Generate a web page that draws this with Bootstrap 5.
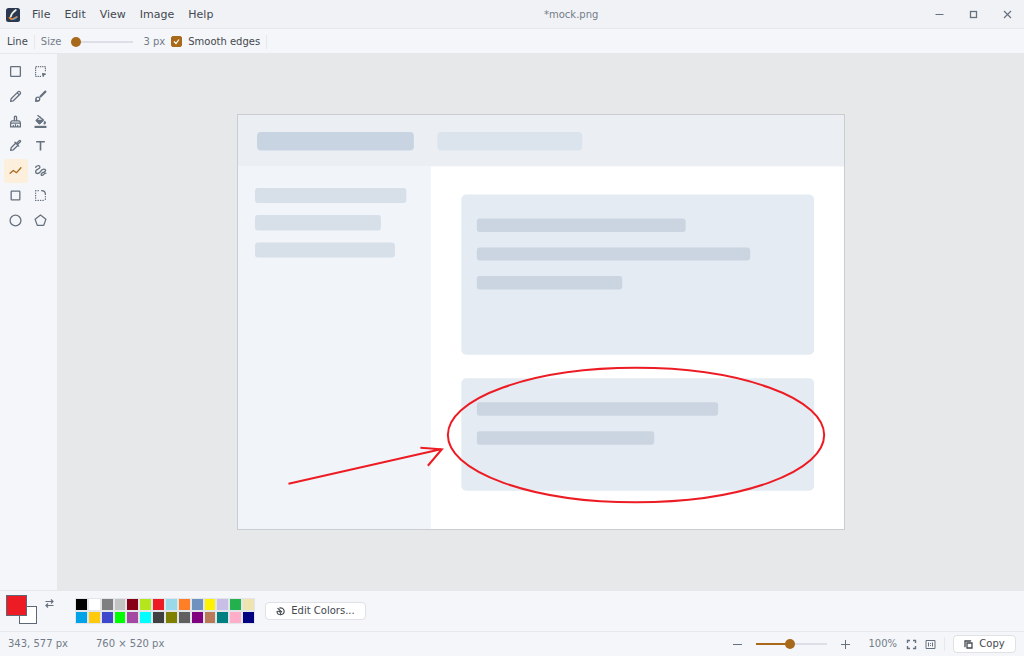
<!DOCTYPE html>
<html lang="en">
<head>
<meta charset="utf-8">
<meta name="viewport" content="width=device-width, initial-scale=1">
<title>*mock.png</title>
<link rel="stylesheet" href="https://cdn.jsdelivr.net/npm/bootstrap@5.3.0/dist/css/bootstrap.min.css">
<style>
  :root { --accent: #a9691a; --ink: #43484f; --muted: #727c89; --bar: #f5f6f9; --line: #e6e8eb; }
  body { font: 10px/16px "DejaVu Sans", sans-serif; color: var(--ink); background: var(--bar); }
  svg { display: block; flex: none; }
  .ico { width: 13px; height: 13px; fill: none; stroke: currentColor; stroke-width: 2.4; stroke-linecap: round; stroke-linejoin: round; }
  .flat { border: 0; padding: 0; background: none; color: #66717f; display: flex; align-items: center; justify-content: center; }
  .titlebar { height: 29px; padding: 1px 0 0 6px; background: #f1f2f6; border-bottom: 1px solid var(--line); }
  .menu { margin-left: 5px; }
  .menu-item { border: 0; padding: 0 7px; background: none; color: var(--ink); font-size: 11px; }
  .win { width: 34px; }
  .optionbar { height: 25px; gap: 6px; border-bottom: 1px solid var(--line); padding: 1px 0 0 7px; }
  .rule { width: 1px; height: 14px; background: var(--line); }
  .hint { color: var(--muted); }
  .slider { appearance: none; height: 10px; margin: 0; background: linear-gradient(#dcdfe7, #dcdfe7) center / 100% 2px no-repeat; }
  .slider::-webkit-slider-thumb { appearance: none; width: 10px; height: 10px; border-radius: 50%; background: var(--accent); }
  .size-slider { width: 62px; margin: 0 4px; }
  .zoom-slider { width: 71px; margin: 0 14px; background: linear-gradient(90deg, var(--accent) 48%, #dcdfe7 48%) center / 100% 2px no-repeat; }
  .tick { appearance: none; width: 11px; height: 11px; margin: 0; border-radius: 2px; border: 1px solid var(--accent); }
  .tick:checked { background: var(--accent) url("data:image/svg+xml,%3Csvg xmlns='http://www.w3.org/2000/svg' viewBox='0 0 11 11'%3E%3Cpath d='M3 5.5l2 2 3-4' fill='none' stroke='white' stroke-width='1.2'/%3E%3C/svg%3E") center / 11px no-repeat; }
  .toolbox { width: 58px; padding: 6px 4px; border-right: 1px solid var(--line); }
  .tools { display: grid; grid-template-columns: 24px 24px; grid-auto-rows: 1fr; gap: 1px; height: 172px; }
  .tools .flat { border-radius: 3px; padding-right: 1px; }
  .tools .active { background: #fcefdc; color: var(--accent); }
  .workspace { min-height: 0; }
  .stage { background: #e7e8ea; }
  .picture { width: 63%; min-width: 320px; background: #fff; border: 1px solid #c9ccd0; }
  .picture svg { width: 100%; height: auto; }
  .palettebar { height: 41px; border-top: 1px solid var(--line); padding-left: 6px; }
  .pair { position: relative; width: 31px; height: 29px; margin-bottom: 3px; }
  .fore, .back { position: absolute; border: 1px solid #5d6876; padding: 0; }
  .fore { left: 0; top: 0; width: 21px; height: 21px; background: #ed1c24; z-index: 1; }
  .back { right: 0; bottom: 0; width: 18px; height: 18px; background: #fff; }
  .swatches { display: grid; grid-template-columns: repeat(14, 1fr); gap: 2px; width: 178px; height: 24px; margin: 0 11px 0 22px; }
  .swatches button { border: 0; padding: 0; background: var(--c); box-shadow: 0 0 0 1px #e2e5e9; }
  .soft { display: flex; align-items: center; justify-content: center; gap: 6px; height: 18px; border: 1px solid #dfe1e7; border-radius: 4px; padding: 0; background: #fff; color: var(--ink); }
  .edit-colors { width: 101px; }
  .copy { width: 63px; }
  .statusbar { height: 25px; border-top: 1px solid var(--line); padding: 0 8px; }
  .dimensions { margin-left: 28px; }
  .percent { margin: 0 9px 0 18px; }
</style>
</head>
<body class="d-flex flex-column vh-100 overflow-hidden">
<header class="titlebar d-flex align-items-center">
  <svg width="14" height="14" viewBox="0 0 14 14" aria-hidden="true"><rect width="14" height="14" rx="2.5" fill="#2a3850"/><path d="M3.5 9.8Q5.5 12.8 10.8 9" fill="none" stroke="#f5852c" stroke-width="1.8" stroke-linecap="round"/><path d="M6.500 11.500Q9.500 11.300 11 9.200" fill="none" stroke="#48a5df" stroke-width="1.2"/><path d="M9.800 2Q5.500 5 4.800 8.700" fill="none" stroke="#f2eee8" stroke-width="1.8" stroke-linecap="round"/></svg>
  <nav class="menu d-flex" aria-label="Main">
    <button class="menu-item">File</button><button class="menu-item">Edit</button><button class="menu-item">View</button><button class="menu-item">Image</button><button class="menu-item">Help</button>
  </nav>
  <div class="hint flex-grow-1 text-center">*mock.png</div>
  <div class="d-flex">
    <button class="flat win" aria-label="Minimize"><svg width="9" height="9" viewBox="0 0 9 9" fill="none" stroke="currentColor"><path d="M.5 4.5h8"/></svg></button>
    <button class="flat win" aria-label="Maximize"><svg width="9" height="9" viewBox="0 0 9 9" fill="none" stroke="currentColor" stroke-width="1.3"><rect x="1.500" y="1.500" width="6" height="6"/></svg></button>
    <button class="flat win" aria-label="Close"><svg width="9" height="9" viewBox="0 0 9 9" fill="none" stroke="currentColor" stroke-width="1.2"><path d="M1 1l7 7M8 1L1 8"/></svg></button>
  </div>
</header>
<div class="optionbar d-flex align-items-center">
  <span>Line</span><span class="rule"></span>
  <label class="hint" for="size">Size</label>
  <input class="slider size-slider" id="size" type="range" min="1" max="50" value="1">
  <output class="hint" for="size">3 px</output>
  <input class="tick" id="smooth" type="checkbox" checked>
  <label for="smooth">Smooth edges</label><span class="rule"></span>
</div>
<div class="workspace d-flex flex-grow-1">
  <aside class="toolbox flex-shrink-0">
    <div class="tools">
      <button class="flat" aria-label="Select"><svg class="ico" viewBox="0 0 24 24"><rect x="3" y="3" width="18" height="18" rx="1"/></svg></button>
      <button class="flat" aria-label="Magic select"><svg class="ico" viewBox="0 0 24 24"><path d="M12 21H3V3h18v9" stroke-dasharray=".5 3.500"/><path d="M16 16l5 1-3 1-1 3z" fill="currentColor"/></svg></button>
      <button class="flat" aria-label="Pencil"><svg class="ico" viewBox="0 0 24 24"><path d="M3 21l1-5L17 3q2-1 3.500.5T21 7L8 20zM15 5l4 4"/></svg></button>
      <button class="flat" aria-label="Brush"><svg class="ico" viewBox="0 0 24 24"><path d="M21 3l-9 9" style="stroke-width:4"/><circle cx="7" cy="16.500" r="3.500"/><path d="M4 17l-1 4 5-1"/></svg></button>
      <button class="flat" aria-label="Eraser"><svg class="ico" viewBox="0 0 24 24"><path d="M10 11V4q0-2 2-2t2 2v7M5 11h14q2 1 2 4H3q0-3 2-4zM3 15v7h18v-7M8 19v3M12 18v4M16 19v3"/></svg></button>
      <button class="flat" aria-label="Fill"><svg class="ico" viewBox="0 0 24 24"><path d="M7 1l10 8-7 7-6-6 7-7"/><path d="M5 10h12l-7 6z" fill="currentColor"/><path d="M20 12q2 3 0 4t-1-1z" fill="currentColor"/><path d="M1 22h22" style="stroke-width:4;stroke-linecap:butt"/></svg></button>
      <button class="flat" aria-label="Color picker"><svg class="ico" viewBox="0 0 24 24"><path d="M13 7L4 16l-1 5 5-1 9-9M11 6l7 7"/><path d="M15 7l4-4q1-1 2 0t0 2l-4 4z"/></svg></button>
      <button class="flat" aria-label="Text"><svg class="ico" viewBox="0 0 24 24"><path d="M4 5h16M12 5v16" style="stroke-width:3;stroke-linecap:butt"/></svg></button>
      <button class="flat active" aria-label="Line" aria-pressed="true"><svg class="ico" viewBox="0 0 24 24"><path d="M2 17l6-5 6 4 8-9"/></svg></button>
      <button class="flat" aria-label="Curve"><svg class="ico" viewBox="0 0 24 24"><path d="M3 6c3-4 8-4 8 0s-8 3-8 8 6 4 8 1 5-7 9-5-1 5-4 6-4 5-1 5 3-4 7-4"/></svg></button>
      <button class="flat" aria-label="Rectangle"><svg class="ico" viewBox="0 0 24 24"><rect x="4" y="4" width="16" height="16" rx="1"/></svg></button>
      <button class="flat" aria-label="Rounded rectangle"><svg class="ico" viewBox="0 0 24 24"><path d="M3 3v18h18M3 3h9M21 14v6" stroke-dasharray=".5 4"/><path d="M14 3q7 0 7 7"/></svg></button>
      <button class="flat" aria-label="Ellipse"><svg class="ico" viewBox="0 0 24 24"><circle cx="12" cy="12" r="10"/></svg></button>
      <button class="flat" aria-label="Polygon"><svg class="ico" viewBox="0 0 24 24"><path d="M12 2l10 7.500L18 21H6L2 9.500z"/></svg></button>
    </div>
  </aside>
  <main class="stage flex-grow-1 d-flex align-items-center justify-content-center">
    <div class="picture">
      <svg viewBox="1 1 607 415" role="img" aria-label="Page wireframe with an arrow and a circled card">
        <rect x="1" y="1" width="607" height="51.500" fill="#ebeff4"/><rect x="1" y="52" width="193" height="364" fill="#f1f5fa"/>
        <rect x="20" y="18" width="157" height="18.500" rx="4" fill="#c8d4e2"/><rect x="200.500" y="18" width="145" height="18.500" rx="4" fill="#dbe4ed"/>
        <g fill="#d7dfe8"><rect x="18" y="74" width="151.500" height="15" rx="3"/><rect x="18" y="101" width="126" height="15.500" rx="3"/><rect x="18" y="128.500" width="140" height="15" rx="3"/></g>
        <g fill="#e4ebf3"><rect x="224.500" y="80.500" width="353" height="160.500" rx="5"/><rect x="224.500" y="264.500" width="353" height="112.500" rx="5"/></g>
        <g fill="#cad5e1"><rect x="240" y="104.500" width="209" height="13.500" rx="3"/><rect x="240" y="133.500" width="273.500" height="13" rx="3"/><rect x="240" y="162" width="145.500" height="13.500" rx="3"/><rect x="240" y="288.500" width="241.500" height="13.500" rx="3"/><rect x="240" y="317.500" width="177.500" height="13.500" rx="3"/></g>
        <g fill="none" stroke="#ed1c24" stroke-width="2"><ellipse cx="399.300" cy="321.300" rx="188.300" ry="67.300"/><path d="M51.500 370L204 335.500M183.500 334l21.500 1.500L191 352"/></g>
      </svg>
    </div>
  </main>
</div>
<section class="palettebar d-flex align-items-center" aria-label="Colors">
  <div class="pair"><button class="fore" aria-label="Foreground color"></button><button class="back" aria-label="Background color"></button></div>
  <button class="flat ms-2 mb-3" aria-label="Swap colors"><svg width="9" height="9" viewBox="0 0 18 18" fill="none" stroke="currentColor" stroke-width="2.400"><path d="M1 5h15M12 1l4 4-4 4M17 13H2M6 9l-4 4 4 4"/></svg></button>
  <div class="swatches" id="swatches"></div>
  <button class="soft edit-colors"><svg width="9" height="9" viewBox="0 0 24 24" fill="none" stroke="currentColor" stroke-width="3"><path d="M9 3q7-2 11 3 4 7-1 12-7 5-13 1-4-4-3-8"/><path d="M4 3l12 11M3 12q6-2 8 2t0 7"/></svg>Edit Colors...</button>
</section>
<footer class="statusbar d-flex align-items-center hint">
  <span>343, 577 px</span><span class="dimensions">760 × 520 px</span>
  <div class="ms-auto d-flex align-items-center">
    <button class="flat" aria-label="Zoom out"><svg width="9" height="9" viewBox="0 0 9 9" stroke="currentColor"><path d="M0 4.500h9"/></svg></button>
    <input class="slider zoom-slider" type="range" aria-label="Zoom" min="0" max="100" value="47">
    <button class="flat" aria-label="Zoom in"><svg width="9" height="9" viewBox="0 0 9 9" stroke="currentColor"><path d="M0 4.500h9M4.500 0v9"/></svg></button>
    <span class="percent">100%</span>
    <button class="flat me-2" aria-label="Fit to window"><svg width="11" height="11" viewBox="0 0 11 11" fill="none" stroke="currentColor" stroke-width="1.400"><path d="M1.500 4V1.500H4M7 1.500h2.500V4M9.500 7v2.500H7M4 9.500H1.500V7"/></svg></button>
    <button class="flat me-2" aria-label="Actual size"><svg width="11" height="11" viewBox="0 0 11 11" fill="none" stroke="currentColor"><path d="M1 1.500h9v8H1zM3.500 3.500v4M7.500 3.500v4M5.500 4v1M5.500 6v1"/></svg></button>
    <span class="rule me-2"></span>
    <button class="soft copy"><svg width="9" height="9" viewBox="0 0 9 9" fill="none" stroke="currentColor" stroke-width="1.300"><path d="M3 3h5v5H3zM1.500 6.500H1V1h5.500v.5"/></svg>Copy</button>
  </div>
</footer>
<script src="https://cdn.jsdelivr.net/npm/bootstrap@5.3.0/dist/js/bootstrap.bundle.min.js"></script>
<script>
  const colors = "#000000 #ffffff #7f7f7f #c3c3c3 #880015 #b5e61d #ed1c24 #99d9ea #ff7f27 #7092be #fff200 #c8bfe7 #22b14c #efe4b0 #00a2e8 #ffc90e #3f48cc #00ff00 #a349a4 #00ffff #404040 #808000 #606060 #800080 #b97a57 #008080 #ffaec9 #000080".split(" ");
  document.getElementById("swatches").innerHTML = colors.map(c => `<button style="--c:${c}" aria-label="${c}"></button>`).join("");
</script>
</body>
</html>
